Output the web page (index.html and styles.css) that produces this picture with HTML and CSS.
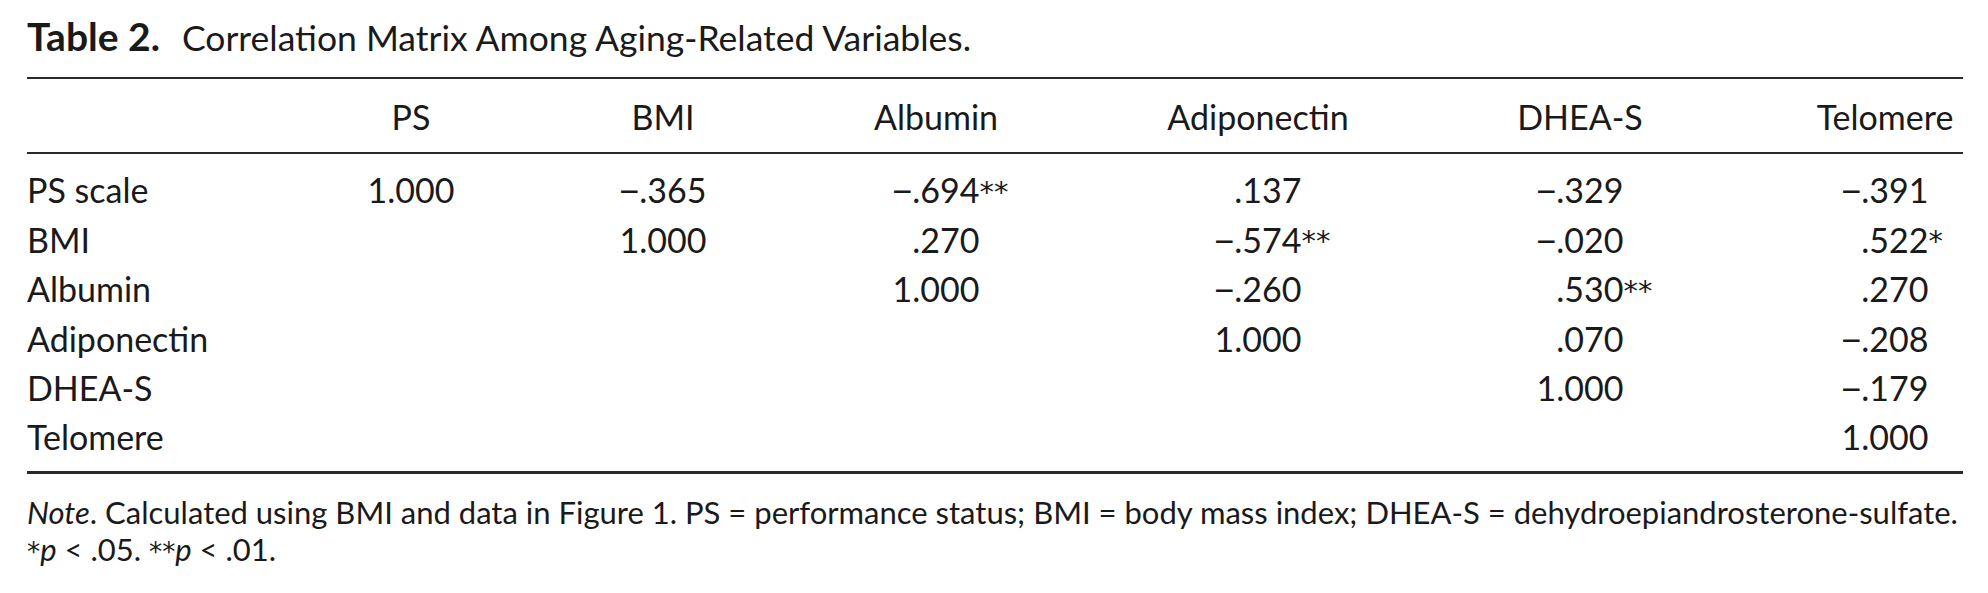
FILE: index.html
```html
<!DOCTYPE html>
<html lang="en">
<head>
<meta charset="utf-8">
<title>Table 2</title>
<link rel="stylesheet" href="styles.css">
</head>
<body>
<div class="page">
  <div class="title"><span class="tlabel">Table 2.</span>Correlation Matrix Among Aging-Related Variables.</div>
  <div class="table">
    <div class="row head">
      <div class="cell lab"></div>
      <div class="cell">PS</div>
      <div class="cell">BMI</div>
      <div class="cell">Albumin</div>
      <div class="cell">Adiponectin</div>
      <div class="cell">DHEA-S</div>
      <div class="cell last">Telomere</div>
    </div>
    <div class="tbody">
      <div class="row">
        <div class="cell lab">PS scale</div>
        <div class="cell"><span class="num"><span class="int">1</span>.000</span></div>
        <div class="cell"><span class="num"><span class="int neg">&minus;</span>.365</span></div>
        <div class="cell"><span class="num"><span class="int neg">&minus;</span>.694<span class="sig">**</span></span></div>
        <div class="cell"><span class="num"><span class="int"></span>.137</span></div>
        <div class="cell"><span class="num"><span class="int neg">&minus;</span>.329</span></div>
        <div class="cell last"><span class="num"><span class="int neg">&minus;</span>.391</span></div>
      </div>
      <div class="row">
        <div class="cell lab">BMI</div>
        <div class="cell"></div>
        <div class="cell"><span class="num"><span class="int">1</span>.000</span></div>
        <div class="cell"><span class="num"><span class="int"></span>.270</span></div>
        <div class="cell"><span class="num"><span class="int neg">&minus;</span>.574<span class="sig">**</span></span></div>
        <div class="cell"><span class="num"><span class="int neg">&minus;</span>.020</span></div>
        <div class="cell last"><span class="num"><span class="int"></span>.522<span class="sig">*</span></span></div>
      </div>
      <div class="row">
        <div class="cell lab">Albumin</div>
        <div class="cell"></div>
        <div class="cell"></div>
        <div class="cell"><span class="num"><span class="int">1</span>.000</span></div>
        <div class="cell"><span class="num"><span class="int neg">&minus;</span>.260</span></div>
        <div class="cell"><span class="num"><span class="int"></span>.530<span class="sig">**</span></span></div>
        <div class="cell last"><span class="num"><span class="int"></span>.270</span></div>
      </div>
      <div class="row">
        <div class="cell lab">Adiponectin</div>
        <div class="cell"></div>
        <div class="cell"></div>
        <div class="cell"></div>
        <div class="cell"><span class="num"><span class="int">1</span>.000</span></div>
        <div class="cell"><span class="num"><span class="int"></span>.070</span></div>
        <div class="cell last"><span class="num"><span class="int neg">&minus;</span>.208</span></div>
      </div>
      <div class="row">
        <div class="cell lab">DHEA-S</div>
        <div class="cell"></div>
        <div class="cell"></div>
        <div class="cell"></div>
        <div class="cell"></div>
        <div class="cell"><span class="num"><span class="int">1</span>.000</span></div>
        <div class="cell last"><span class="num"><span class="int neg">&minus;</span>.179</span></div>
      </div>
      <div class="row">
        <div class="cell lab">Telomere</div>
        <div class="cell"></div>
        <div class="cell"></div>
        <div class="cell"></div>
        <div class="cell"></div>
        <div class="cell"></div>
        <div class="cell last"><span class="num"><span class="int">1</span>.000</span></div>
      </div>
    </div>
  </div>
  <div class="note">
    <p><em>Note</em>. Calculated using BMI and data in Figure 1. PS = performance status; BMI = body mass index; DHEA-S = dehydroepiandrosterone-sulfate.</p>
    <p><span class="nstar">*</span><em>p</em> &lt; .05. <span class="nstar">**</span><em>p</em> &lt; .01.</p>
  </div>
</div>
</body>
</html>
```

FILE: styles.css
```css
html, body {
  margin: 0;
  padding: 0;
  background: #ffffff;
}

.page {
  width: 1936px;
  padding: 12px 0 0 27px;
  font-family: "Lato", "Open Sans", "Liberation Sans", sans-serif;
  color: #1a1a1a;
}

.title {
  font-size: 35.5px;
  line-height: 48px;
  height: 48px;
  margin-bottom: 17px;
  white-space: nowrap;
}

.tlabel {
  font-weight: 700;
  font-size: 39px;
  margin-right: 22px;
}

.table {
  border-top: 2px solid #2a2a2a;
  font-size: 34px;
}

.row {
  display: grid;
  grid-template-columns: 258px 252px 252px 294px 350px 294px 236px;
  line-height: 48px;
}

.head {
  padding: 14px 0 11px;
  border-bottom: 2px solid #2a2a2a;
}

.tbody {
  padding: 12px 0 10px;
  border-bottom: 3px solid #2a2a2a;
}

.cell {
  text-align: center;
  white-space: nowrap;
}

.cell.lab {
  text-align: left;
}

.cell.last {
  padding-left: 80px;
}

.num {
  display: inline-block;
  text-align: left;
}

.int {
  display: inline-block;
  width: 0.58em;
  text-align: right;
}

.int.neg {
  font-family: "Liberation Sans", "Lato", sans-serif;
}

.sig {
  display: inline-block;
  width: 0;
  overflow: visible;
  font-family: "DejaVu Sans", "Lato", sans-serif;
  font-size: 0.85em;
  vertical-align: 0.05em;
}

.note {
  margin-top: 20px;
  font-size: 31px;
  line-height: 37px;
}

.note p {
  margin: 0;
}

.nstar {
  font-family: "DejaVu Sans", "Lato", sans-serif;
  font-size: 0.85em;
}
```
